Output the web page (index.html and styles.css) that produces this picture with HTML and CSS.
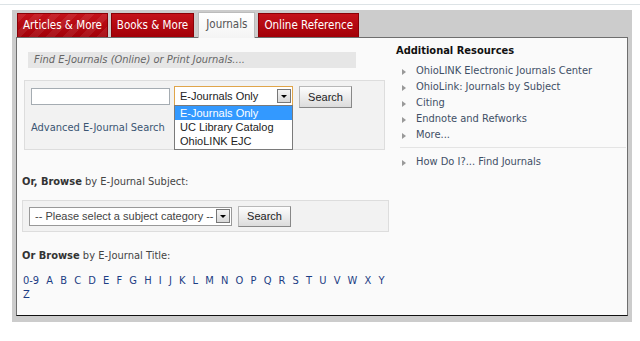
FILE: index.html
```html
<!DOCTYPE html>
<html lang="en">
<head>
    <meta charset="UTF-8">
    <title>Journals</title>
    <link rel="stylesheet" href="styles.css">
</head>
<body>
    <div class="topline"></div>
    <div class="frame">
        <div class="tabs">
            <a class="tab hover" href="#">Articles &amp; More</a>
            <a class="tab" href="#">Books &amp; More</a>
            <a class="tab active" href="#">Journals</a>
            <a class="tab" href="#">Online Reference</a>
        </div>
        <div class="panel">
            <div class="main">
                <div class="find">Find E-Journals (Online) or Print Journals....</div>

                <div class="searchbox">
                    <div class="row">
                        <input type="text" class="query">
                        <div class="select focused">
                            <span>E-Journals Only</span>
                            <span class="arrow"></span>
                            <ul class="options">
                                <li class="selected">E-Journals Only</li>
                                <li>UC Library Catalog</li>
                                <li>OhioLINK EJC</li>
                            </ul>
                        </div>
                        <button type="button" class="btn">Search</button>
                    </div>
                    <a class="advanced" href="#">Advanced E-Journal Search</a>
                </div>

                <h3 class="browse first"><b>Or, Browse</b> by E-Journal Subject:</h3>
                <div class="subjectbox">
                    <div class="select subject">
                        <span>-- Please select a subject category --</span>
                        <span class="arrow"></span>
                    </div>
                    <button type="button" class="btn">Search</button>
                </div>

                <h3 class="browse"><b>Or Browse</b> by E-Journal Title:</h3>
                <div class="letters">
                    <a href="#">0-9</a> <a href="#">A</a> <a href="#">B</a> <a href="#">C</a> <a href="#">D</a> <a href="#">E</a> <a href="#">F</a> <a href="#">G</a> <a href="#">H</a> <a href="#">I</a> <a href="#">J</a> <a href="#">K</a> <a href="#">L</a> <a href="#">M</a> <a href="#">N</a> <a href="#">O</a> <a href="#">P</a> <a href="#">Q</a> <a href="#">R</a> <a href="#">S</a> <a href="#">T</a> <a href="#">U</a> <a href="#">V</a> <a href="#">W</a> <a href="#">X</a> <a href="#">Y</a> <a href="#">Z</a>
                </div>
            </div>

            <div class="side">
                <h4>Additional Resources</h4>
                <ul class="links">
                    <li><a href="#">OhioLINK Electronic Journals Center</a></li>
                    <li><a href="#">OhioLink: Journals by Subject</a></li>
                    <li><a href="#">Citing</a></li>
                    <li><a href="#">Endnote and Refworks</a></li>
                    <li><a href="#">More...</a></li>
                </ul>
                <ul class="links howto">
                    <li><a href="#">How Do I?... Find Journals</a></li>
                </ul>
            </div>
        </div>
    </div>
</body>
</html>
```

FILE: styles.css
```css
body {
    margin: 0;
    background: #fff;
    font-family: "DejaVu Sans Condensed", "DejaVu Sans", Verdana, sans-serif;
    font-size: 11px;
    color: #333;
}

a {
    text-decoration: none;
}

.topline {
    height: 4px;
    border-bottom: 1px solid #dde3e6;
    margin-bottom: 5px;
}

.frame {
    margin: 0 8px 0 12px;
    width: 612px;
    background: #cccccc;
    padding: 3px 4px 6px 4px;
}

.tabs {
    display: flex;
    align-items: flex-end;
    gap: 3px;
    padding-left: 1px;
    height: 24px;
}

.tab {
    display: block;
    height: 23px;
    line-height: 23px;
    padding: 0 5px;
    font-size: 11.5px;
    color: #fff;
    background: linear-gradient(#c4121a, #a20008);
    border: 1px solid #8a0006;
    border-bottom: none;
}

.tab.hover {
    background:
        repeating-linear-gradient(135deg, rgba(255,255,255,0.08) 0 6px, transparent 6px 12px),
        linear-gradient(#c4121a, #a20008);
}

.tab.active {
    height: 25px;
    margin-bottom: -1px;
    margin-left: 1px;
    padding: 0 7px;
    color: #555;
    background: linear-gradient(#ffffff, #f4f4f4);
    border-color: #bbb;
    position: relative;
}

.panel {
    display: flex;
    height: 277px;
    background: #fafafa;
    border: 1px solid #6e6e6e;
    border-bottom-color: #111;
}

.main {
    width: 374px;
    padding: 14px 0 0 5px;
    flex: none;
}

.find {
    margin-left: 6px;
    width: 322px;
    height: 16px;
    line-height: 16px;
    padding-left: 6px;
    background: #e6e6e6;
    color: #666;
    font-style: italic;
}

.searchbox {
    margin: 12px 0 0 2px;
    width: 347px;
    height: 56px;
    padding: 5px 6px 7px 6px;
    background: #f2f2f2;
    border: 1px solid #dddddd;
}

.row {
    display: flex;
    align-items: flex-start;
}

.query {
    box-sizing: border-box;
    width: 139px;
    height: 17px;
    margin: 2px 4px 0 0;
    border: 1px solid #a5acb2;
    background: #fff;
    padding: 0;
}

.select {
    box-sizing: border-box;
    position: relative;
    display: flex;
    align-items: center;
    height: 20px;
    width: 119px;
    padding-left: 5px;
    background: #fff;
    border: 1px solid #a5acb2;
    font-family: "Liberation Sans", Arial, sans-serif;
    font-size: 11px;
    color: #222;
}

.select.focused {
    border-color: #e0a54a;
}

.select span:first-child {
    flex: 1;
    white-space: nowrap;
    overflow: hidden;
}

.arrow {
    width: 14px;
    height: 14px;
    margin-right: 1px;
    box-sizing: border-box;
    border: 1px solid #777;
    background: linear-gradient(#f4f4f4, #d8d8d8);
    position: relative;
}

.arrow::after {
    content: "";
    position: absolute;
    left: 3px;
    top: 5px;
    border-left: 3px solid transparent;
    border-right: 3px solid transparent;
    border-top: 3px solid #000;
}

.options {
    position: absolute;
    left: -1px;
    top: 18px;
    width: 117px;
    margin: 0;
    padding: 0 0 1px 0;
    list-style: none;
    background: #fff;
    border: 1px solid #7a7a7a;
    z-index: 2;
}

.options li {
    height: 14px;
    line-height: 14px;
    padding-left: 5px;
}

.options li.selected {
    background: #3399ff;
    color: #fff;
}

.btn {
    height: 22px;
    width: 53px;
    margin-left: 6px;
    padding: 0;
    font-family: "Liberation Sans", Arial, sans-serif;
    font-size: 11px;
    color: #222;
    background: linear-gradient(#fdfdfd, #dcdcdc);
    border: 1px solid #b8b8b8;
    border-right-color: #888;
    border-bottom-color: #888;
}

.advanced {
    display: block;
    margin-top: 13px;
    color: #3a5572;
    font-size: 11px;
}

.browse {
    margin: 24px 0 0 0;
    height: 16px;
    line-height: 16px;
    font-size: 11px;
    font-weight: normal;
    color: #444;
}

.browse b {
    color: #333;
}

.subjectbox {
    display: flex;
    align-items: center;
    margin: 10px 0 0 0;
    width: 359px;
    height: 30px;
    padding-left: 6px;
    background: #f2f2f2;
    border: 1px solid #dddddd;
}

.subjectbox .btn {
    height: 21px;
}

.select.subject {
    width: 203px;
    height: 19px;
    color: #444;
    border-color: #999;
}

.browse.first + .subjectbox + .browse {
    margin-top: 16px;
}

.letters {
    margin: 10px 0 0 1px;
    width: 368px;
    line-height: 14px;
    word-spacing: 4px;
}

.letters a {
    color: #1c3d84;
}

.side {
    flex: 1;
    padding: 5px 0 0 0;
}

.side h4 {
    margin: 0;
    height: 16px;
    line-height: 16px;
    font-size: 11px;
    color: #111;
}

.links {
    list-style: none;
    margin: 4px 0 0 4px;
    padding: 0 0 4px 0;
    border-bottom: 1px solid #e4e4e4;
    width: 226px;
}

.links li {
    position: relative;
    height: 16px;
    line-height: 16px;
    padding-left: 16px;
}

.links li::before {
    content: "";
    position: absolute;
    left: 2px;
    top: 6px;
    border-top: 3px solid transparent;
    border-bottom: 3px solid transparent;
    border-left: 4px solid #999;
}

.links a {
    color: #3f4f66;
}

.links.howto {
    border-bottom: none;
    margin-top: 6px;
}
```
